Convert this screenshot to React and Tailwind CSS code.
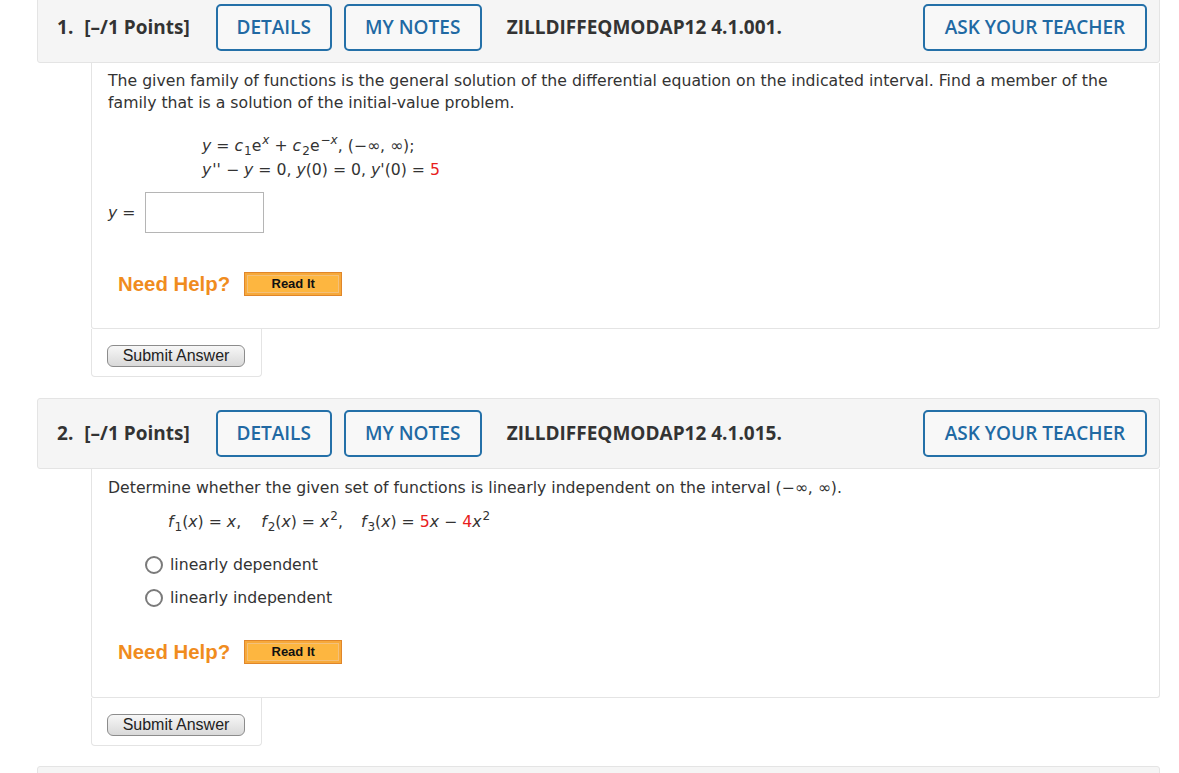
import React from "react";

const sans = { fontFamily: '"Open Sans", "Noto Sans", sans-serif' };
const verd = { fontFamily: '"DejaVu Sans", Verdana, sans-serif' };
const arial = { fontFamily: '"Liberation Sans", Arial, sans-serif' };

function BlueBtn({ children, w }) {
  return (
    <div
      className={`h-[47px] ${w} flex items-center justify-center border-2 border-[#2470a8] rounded-[5px] text-[#2169a3] text-[19px] font-semibold bg-[#f8f8f8]`}
      style={sans}
    >
      {children}
    </div>
  );
}

function Header({ num, code }) {
  return (
    <div
      className="h-[71px] bg-[#f5f5f5] border border-[#e4e4e4] rounded-[3px] flex items-center pl-[19px] pr-[12px] text-[#333]"
      style={sans}
    >
      <span className="text-[19px] font-bold mr-[11px]">{num}.</span>
      <span className="text-[19px] font-bold">[–/1 Points]</span>
      <div className="ml-[26px] flex gap-[12px]">
        <BlueBtn w="w-[116px]">DETAILS</BlueBtn>
        <BlueBtn w="w-[138px]">MY NOTES</BlueBtn>
      </div>
      <span className="ml-[25px] text-[19px] font-bold text-[#333]">{code}</span>
      <div className="ml-auto">
        <BlueBtn w="w-[224px]">ASK YOUR TEACHER</BlueBtn>
      </div>
    </div>
  );
}

function ReadIt() {
  return (
    <div className="w-[98px] h-[24px] border border-[#e0862a] bg-[#f7a93a] p-[2px]">
      <div
        className="w-full h-full border border-[#f3c07a] bg-[#fdb640] flex items-center justify-center text-[13px] font-bold text-[#111]"
        style={arial}
      >
        Read It
      </div>
    </div>
  );
}

function NeedHelp({ mt, pb }) {
  return (
    <div className={`${mt} ${pb} ml-[10px] h-[28px] flex items-center gap-[14px]`}>
      <span className="text-[20.4px] font-bold text-[#f08c1e]" style={arial}>
        Need Help?
      </span>
      <ReadIt />
    </div>
  );
}

function Submit() {
  return (
    <div className="ml-[54px] w-[171px] border-x border-b border-[#e4e4e4] rounded-b-[4px] pl-[15px] pt-[16px] pb-[9px] bg-white">
      <div
        className="w-[138px] h-[22px] rounded-[6px] border border-[#8c8c8c] bg-gradient-to-b from-[#f7f7f7] to-[#d9d9d9] flex items-center justify-center text-[16px] text-[#222]"
        style={arial}
      >
        Submit Answer
      </div>
    </div>
  );
}

function Radio({ children }) {
  return (
    <div className="h-[33px] flex items-center ml-[37px]">
      <span className="w-[18px] h-[18px] rounded-full border-2 border-[#7a7a7a] bg-white"></span>
      <span className="ml-[7px] text-[15.7px] text-[#333]">{children}</span>
    </div>
  );
}

const Sub = ({ children }) => (
  <span className="relative top-[4px] text-[12px] leading-none ml-[1px]">{children}</span>
);
const Sup = ({ children }) => (
  <span className="relative -top-[7px] text-[12px] leading-none ml-[1px]">{children}</span>
);

export default function App() {
  return (
    <div className="bg-white w-[1179px] h-[773px] overflow-hidden text-[#333]" style={verd}>
      <div className="-mt-[8px] ml-[37px] w-[1123px]">
        {/* Question 1 */}
        <Header num="1" code="ZILLDIFFEQMODAP12 4.1.001." />
        <div className="ml-[54px] border-x border-b border-[#e4e4e4] rounded-b-[3px] pl-[16px] pt-[7px]">
          <p className="text-[15.7px] leading-[22px] text-[#333]">
            The given family of functions is the general solution of the differential equation on the indicated interval. Find a member of the
            <br />
            family that is a solution of the initial-value problem.
          </p>
          <div className="mt-[20px] ml-[94px] text-[15.7px] leading-[24px]">
            <div>
              <i>y</i> = <i>c</i>
              <Sub>1</Sub>e<Sup><i>x</i></Sup> + <i>c</i>
              <Sub>2</Sub>e<Sup>−<i>x</i></Sup>, (−∞, ∞);
            </div>
            <div>
              <i>y</i>
              <span className="ml-[1px]">''</span> − <i>y</i> = 0, <i>y</i>(0) = 0, <i>y</i>'(0) ={" "}
              <span className="text-[#e8201c]">5</span>
            </div>
          </div>
          <div className="mt-[10px] flex items-center h-[41px]">
            <span className="text-[15.7px]">
              <i>y</i> =
            </span>
            <div className="ml-[10px] w-[119px] h-[41px] border border-[#b5b5b5] bg-white"></div>
          </div>
          <NeedHelp mt="mt-[37px]" pb="mb-[30px]" />
        </div>
        <Submit />

        {/* Question 2 */}
        <div className="mt-[21px]">
          <Header num="2" code="ZILLDIFFEQMODAP12 4.1.015." />
        </div>
        <div className="ml-[54px] border-x border-b border-[#e4e4e4] rounded-b-[3px] pl-[16px] pt-[8px]">
          <p className="text-[15.7px] leading-[22px]">
            Determine whether the given set of functions is linearly independent on the interval (−∞, ∞).
          </p>
          <div className="mt-[11px] ml-[60px] text-[15.7px] leading-[24px] whitespace-nowrap">
            <i>f</i>
            <Sub>1</Sub>(<i>x</i>) = <i>x</i>,
            <span className="inline-block w-[20px]"></span>
            <i>f</i>
            <Sub>2</Sub>(<i>x</i>) = <i>x</i>
            <Sup>2</Sup>,
            <span className="inline-block w-[18px]"></span>
            <i>f</i>
            <Sub>3</Sub>(<i>x</i>) = <span className="text-[#e8201c]">5</span>
            <i>x</i> − <span className="text-[#e8201c]">4</span>
            <i>x</i>
            <Sup>2</Sup>
          </div>
          <div className="mt-[14px]">
            <Radio>linearly dependent</Radio>
            <Radio>linearly independent</Radio>
          </div>
          <NeedHelp mt="mt-[24px]" pb="mb-[31px]" />
        </div>
        <Submit />

        <div className="mt-[20px] h-[40px] bg-[#f5f5f5] border border-[#e4e4e4] rounded-[3px]"></div>
      </div>
    </div>
  );
}
